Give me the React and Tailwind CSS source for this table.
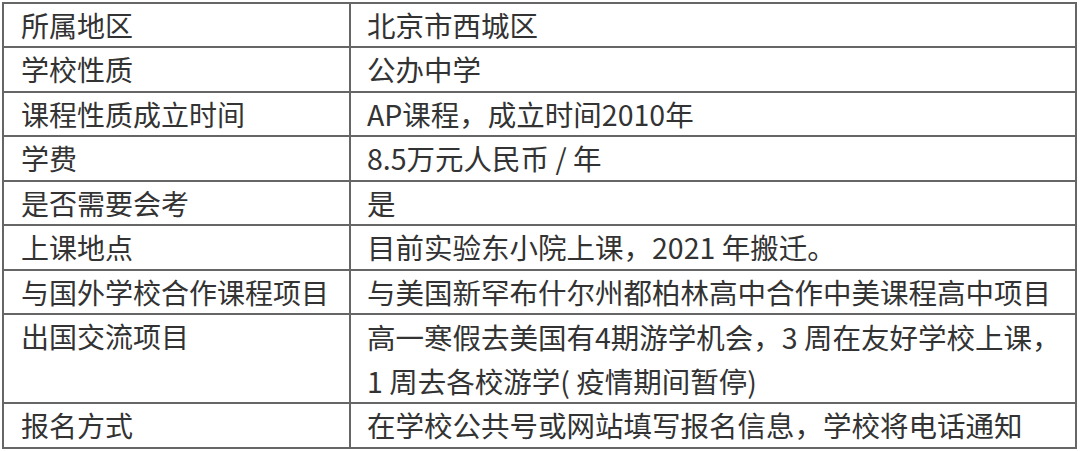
const rows = [
  ["所属地区", ["北京市西城区"]],
  ["学校性质", ["公办中学"]],
  ["课程性质成立时间", ["AP课程，成立时间2010年"]],
  ["学费", ["8.5万元人民币 / 年"]],
  ["是否需要会考", ["是"]],
  ["上课地点", ["目前实验东小院上课，2021 年搬迁。"]],
  ["与国外学校合作课程项目", ["与美国新罕布什尔州都柏林高中合作中美课程高中项目"]],
  ["出国交流项目", ["高一寒假去美国有4期游学机会，3 周在友好学校上课，", "1 周去各校游学( 疫情期间暂停)"]],
  ["报名方式", ["在学校公共号或网站填写报名信息，学校将电话通知"]],
];

export default function App() {
  return (
    <div className="w-[1080px] h-[451px] bg-white pl-[2px] pt-[1.5px] overflow-hidden">
      <table
        className="w-[1075px] border-collapse text-[28px] text-[#333333]"
        style={{ fontFamily: '"Noto Sans CJK SC", "Noto Sans", sans-serif' }}
      >
        <tbody>
          {rows.map(([label, lines]) => (
            <tr key={label}>
              <td className="w-[347px] border-2 border-[#666666] pl-[17px] align-top leading-[42.5px] whitespace-nowrap">
                {label}
              </td>
              <td className="border-2 border-[#666666] pl-[16px] align-top text-[28.5px] leading-[42.5px] whitespace-nowrap">
                {lines.map((t, i) => (
                  <div key={i} className={lines.length > 1 ? "leading-[43.5px]" : ""}>
                    {t}
                  </div>
                ))}
              </td>
            </tr>
          ))}
        </tbody>
      </table>
    </div>
  );
}
